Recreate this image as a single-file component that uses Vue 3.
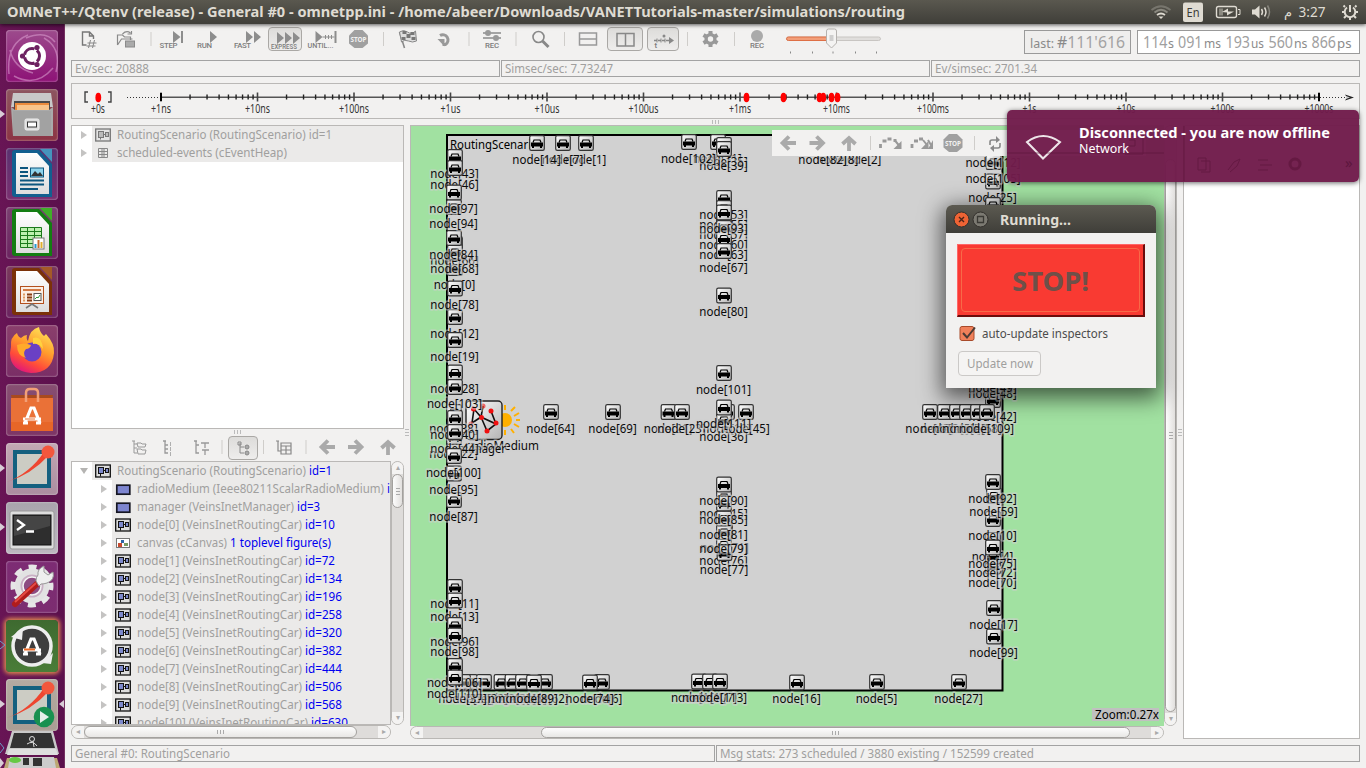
<script setup>
import { h } from 'vue'

// Single-line label with a fixed advance width.
const Fit = (p) => {
  const size = Number(p.size || 12.5)
  const w = Number(p.w)
  const line = Math.round(size * 1.36)
  return h('svg', { width: w, height: line, style: 'flex:none;display:block;overflow:visible' }, [
    h('text', {
      x: 0, y: Math.round(size * 1.06), textLength: w, lengthAdjust: 'spacingAndGlyphs',
      'font-size': size, 'font-weight': p.bold ? 700 : 400, fill: 'currentColor'
    }, p.t)
  ])
}
Fit.props = ['t', 'w', 'size', 'bold']

const dock = [
  { id: 'dash', top: '#9c4b8c', bottom: '#8d1276' },
  { id: 'files', top: '#8d5560', bottom: '#8c3444', run: 1 },
  { id: 'writer', top: '#5a3270', bottom: '#7a3070' },
  { id: 'calc', top: '#7a4070', bottom: '#6b2360' },
  { id: 'impress', top: '#7a3a5c', bottom: '#6b2360' },
  { id: 'firefox', top: '#8a3f6c', bottom: '#7a2e66' },
  { id: 'store', top: '#875072', bottom: '#7d3566' },
  { id: 'sketch', top: '#c3a8b4', bottom: '#ab8da0', run: 1 },
  { id: 'term', top: '#a9a4ad', bottom: '#bdb8c0', run: 1 },
  { id: 'settings', top: '#7d2c74', bottom: '#7c2d70' },
  { id: 'updater', top: '#3e6a30', bottom: '#4a7d38', run: 2 },
  { id: 'play', top: '#b5aaa2', bottom: '#aa9d94', run: 1, active: 1 }
]

const tools = [
  ['new', 37], ['open', 37], ['sep', 12], ['step', 29], ['run', 40], ['fast', 40], ['express', 38, 1],
  ['until', 35], ['stop', 39], ['sep', 11], ['flag', 37], ['redo', 37], ['sep', 12], ['evlog', 34],
  ['sep', 14], ['search', 35], ['sep', 13], ['hsplit', 34], ['vsplit', 40, 1], ['tline', 36, 1],
  ['sep', 13], ['gear', 33], ['sep', 15], ['rec', 30], ['slider', 117]
]
const treeTools = [
  ['tree1', 30], ['tree2', 28], ['tree3', 38], ['sep', 4], ['tree4', 38, 1], ['sep', 3],
  ['tree5', 38], ['sep', 6], ['left', 36], ['right', 22], ['up', 42]
]
const viewTools = [
  ['left', 32], ['right', 27], ['up', 36], ['sep', 7], ['jump', 33], ['jump2', 30], ['stop', 32],
  ['sep', 11], ['refresh', 30]
]

const pitch = 96.5
const names = ['1ns', '10ns', '100ns', '1us', '10us', '100us', '1ms', '10ms', '100ms', '1s', '10s', '100s', '1000s']
const majors = names.map((n, i) => ({ n: '+' + n, x: 161 + i * pitch, w: (n.endsWith('s') && !/[num]s$/.test(n) ? 14 + (n.length - 2) * 5 : 20 + (n.length - 3) * 5) + (n.includes('ms') ? 2 : 0) }))
const minors = []
for (let i = 0; i < 12; i++) for (let k = 2; k < 10; k++) minors.push(161 + (i + Math.log10(k)) * pitch)
const events = [98.3, 746.5, 783.5, 819.5, 823.3, 831.5, 837.5]

const car = (n, id) => ({ a: `node[${n}] (VeinsInetRoutingCar)`, w: n > 9 ? 171 : 165, b: 'id=' + id, bw: id > 99 ? 37 : 30, ic: 'net' })
const rows = [
  { a: 'radioMedium (Ieee80211ScalarRadioMedium)', w: 247, b: 'id=2', bw: 23, ic: 'mod' },
  { a: 'manager (VeinsInetManager)', w: 157, b: 'id=3', bw: 23, ic: 'mod' },
  car(0, 10),
  { a: 'canvas (cCanvas)', w: 90, b: '1 toplevel figure(s)', bw: 101, ic: 'canvas' },
  ...[72, 134, 196, 258, 320, 382, 444, 506, 568, 630].map((id, i) => car(i + 1, id))
]

// [index, x, y] of each vehicle icon centre
const cars = [
  [14, 537, 143], [7, 563, 143], [1, 586, 143], [102, 689, 142], [31, 718, 142], [35, 724, 145], [39, 724, 149],
  [82, 823, 143], [8, 838, 143], [2, 861, 143],
  [43, 455, 157], [46, 455, 168], [97, 454, 192.5], [94, 454, 207], [84, 454, 238], [66, 455, 244], [68, 455, 252],
  [0, 455, 268], [78, 455, 288.5], [12, 455, 317], [19, 455, 340], [28, 455, 372.5], [103, 455, 387],
  [38, 454, 412], [40, 455, 418], [44, 455, 432], [22, 454, 437], [100, 454, 456], [95, 454, 473.5], [87, 454, 500],
  [11, 455, 587], [13, 455, 600.5], [96, 455, 625], [98, 455, 635.5], [106, 455, 666], [110, 455, 677.5],
  [37, 463, 682], [20, 470, 682], [32, 484, 682], [29, 501.5, 682], [33, 512.5, 682], [41, 523, 682], [89, 534, 682.5], [62, 545, 682],
  [74, 590, 682.5], [6, 602, 682],
  [64, 551, 412], [69, 613, 412], [21, 668.5, 412], [23, 682, 412], [111, 724, 407.5], [18, 727, 412], [36, 724, 420], [45, 746, 412],
  [53, 724, 198], [55, 724, 208], [93, 724, 212.5], [57, 724, 218.5], [60, 724, 228], [63, 724, 238.5], [67, 724, 251],
  [80, 724, 295.5], [101, 724, 373],
  [90, 724, 484.5], [15, 724, 497], [85, 724, 503.5], [81, 724, 518.5], [71, 725, 531.5], [79, 724, 532], [76, 724, 544.5], [77, 724.5, 553],
  [104, 699, 681.5], [107, 710, 681.5], [113, 720, 681.5],
  [112, 993.5, 146.5], [105, 993.5, 162], [25, 993, 181.5], [26, 993, 205],
  [48, 993, 377.5], [49, 993, 371], [42, 993, 400], [47, 930, 412], [51, 945, 412], [52, 957, 412], [54, 967, 412], [58, 978, 412], [109, 987, 412],
  [92, 993, 482], [59, 994, 495.5], [10, 993, 519], [4, 993, 540], [75, 993, 547.5], [72, 993, 556.5], [70, 993, 566.5],
  [17, 994, 608], [99, 994, 636.5], [27, 959, 682], [5, 877, 682], [16, 797, 682.5]
].sort((a, b) => a[0] - b[0]).map(([n, x, y]) => ({ n, x, y, w: 35 + String(n).length * 6.7 }))
</script>

<template>
  <div class="screen">
    <svg class="defs" width="0" height="0">
      <defs>
        <linearGradient id="ig" x1="0" y1="0" x2="1" y2="1"><stop offset="0" stop-color="#fff" /><stop offset="1" stop-color="#b4b4b4" /></linearGradient>
        <linearGradient id="paper" x1="0" y1="0" x2="0" y2="1"><stop offset="0" stop-color="#fff" /><stop offset="1" stop-color="#ddd" /></linearGradient>
        <linearGradient id="fox" x1=".8" y1="0" x2=".3" y2="1"><stop offset="0" stop-color="#ffe85a" /><stop offset=".45" stop-color="#ff9a2c" /><stop offset=".75" stop-color="#ff4b3a" /><stop offset="1" stop-color="#e0157c" /></linearGradient>

        <g id="sep"><path d="M0-8V6" stroke="#cfcdca" /></g>
        <g id="new" fill="none" stroke="#777"><path d="M-3 5h-4V-8H0L4-4v3M0-8v4h4" stroke-width="1.4" /><path d="M1 0L-1 8M5 0L3 8M-2 3h9M-3 6h9" stroke="#888" /></g>
        <g id="open" fill="none" stroke="#8a8a8a"><path d="M-9 5V-5h5l2 2h6v3M-9 5l4-6H6M-4-6q4-4 8-1M5-9v3H1" stroke-width="1.2" /><rect x="-1" y="1" width="9" height="6" fill="#aaa" /></g>
        <g id="step"><path d="M1.500-9L9-3 1.500 3Z" fill="#8d8d8d" /><path d="M10.500-9V3" stroke="#8d8d8d" stroke-width="2" /><text x="-12" y="8" textLength="18" class="tiny">STEP</text></g>
        <g id="run"><path d="M4-9L11-3 4 3Z" fill="#8d8d8d" /><text x="-9" y="8" textLength="15" class="tiny">RUN</text></g>
        <g id="fast"><path d="M0-9L7-3 0 3ZM8-9L15-3 8 3Z" fill="#8d8d8d" /><text x="-12" y="8" textLength="17" class="tiny">FAST</text></g>
        <g id="express"><path d="M-8-8L-1-2-8 4ZM0-8L7-2 0 4ZM8-8L15-2 8 4Z" fill="#8d8d8d" /><text x="-14" y="9" textLength="26" lengthAdjust="spacingAndGlyphs" class="tiny">EXPRESS</text></g>
        <g id="until"><path d="M-6-9L1-3-6 3Z" fill="#8d8d8d" /><path d="M14-9V3" stroke="#8d8d8d" stroke-width="2" /><path d="M1-3H13M4-5v4M7-5v4M10-5v4" stroke="#8d8d8d" /><text x="-14" y="8" textLength="26" lengthAdjust="spacingAndGlyphs" class="tiny">UNTIL...</text></g>
        <g id="stop"><path d="M-4-10H4L9.500-4.500V3.500L4 8H-4L-9.500 3.500V-4.500Z" fill="#a0a0a0" /><text x="-8" y="2" textLength="16" lengthAdjust="spacingAndGlyphs" font-size="7.500" font-weight="700" fill="#f2f1f0">STOP</text></g>
        <g id="flag"><path d="M-8-8L-3 8" stroke="#888" stroke-width="1.600" /><path d="M-8-8q4-3 8 0t8-1L9 1q-4 2-8 0t-7 1Z" fill="#ddd" stroke="#888" /><path d="M-5-9h4v3h-4zM3-8h4v3H3zM-1-6h4v4h-4zM-6-3h4v3h-4zM4-3h4v3H4z" fill="#777" /></g>
        <g id="redo" fill="none" stroke="#999" stroke-width="3"><path d="M-4.500-4.500A5.200 5.200 0 1 1 1 4.500H-2" /><path d="M-7-1H0V6.500Z" fill="#999" stroke="none" /></g>
        <g id="evlog"><path d="M-9-7H9M-9-2H9" stroke="#8a8a8a" stroke-width="1.600" /><circle cx="-4" cy="-7" r="3" fill="#999" /><circle cx="4" cy="-2" r="3" fill="#999" /><text x="-7" y="8" textLength="14" class="tiny">REC</text></g>
        <g id="search" fill="none" stroke="#888"><circle cx="-2" cy="-3" r="5.500" stroke-width="1.600" /><path d="M2 1L8 7" stroke-width="3" /></g>
        <g id="hsplit" fill="none" stroke="#999" stroke-width="1.500"><path d="M-8.500-7H8.500V5H-8.500ZM-8.500-1H8.500" /></g>
        <g id="vsplit" fill="none" stroke="#888" stroke-width="1.500"><path d="M-8-6.500H9V6H-8ZM.5-6V6" /></g>
        <g id="tline" fill="none" stroke="#888"><path d="M-9 .5H7" stroke-width="1.400" stroke-dasharray="3 1" /><path d="M6-3L11 .5 6 4Z" fill="#888" stroke="none" /><path d="M-6-1.500v4M-2-1.500v4M2-1.500v4" /><circle cx="1" cy="-4" r="1.500" fill="#888" stroke="none" /><text x="-8.500" y="8" stroke="none" class="tiny">t</text></g>
        <g id="gear"><circle cy="-1" r="4.400" fill="none" stroke="#999" stroke-width="3.400" /><path d="M0-9V-5M0 3V7M-7-5L-3.500-3M7-5L3.500-3M-7 3L-3.500 1M7 3L3.500 1" stroke="#999" stroke-width="4" /></g>
        <g id="rec"><circle cy="-4" r="6" fill="#aaa" /><text x="-7" y="8" textLength="14" class="tiny">REC</text></g>
        <g id="slider"><rect x="-44" y="-3" width="94" height="3.500" rx="2" fill="#e0dedc" stroke="#c8c5c2" /><rect x="-44" y="-3" width="44" height="3.500" rx="2" fill="#f29e79" stroke="#de6f45" /><path d="M-2-11h6q2 0 2 2V3L1 8-4 3V-9q0-2 2-2Z" fill="#f4f3f2" stroke="#b5b2af" /><path d="M-1-4h4M-1-2h4M-1 0h4" stroke="#aaa" /><path d="M-40 11.500v2M-18 11.500v2M2.500 11.500v2M25 11.500v2M46 11.500v2" stroke="#888" /></g>
        <g id="left"><path d="M8-1H-5M1-7.500L-5.500-1 1 5.500" fill="none" stroke="#aaa" stroke-width="3.800" /></g>
        <g id="right"><path d="M-8-1H5M-1-7.500L5.500-1-1 5.500" fill="none" stroke="#aaa" stroke-width="3.800" /></g>
        <g id="up"><path d="M0 7V-5M-6.500 0L0-6 6.500 0" fill="none" stroke="#aaa" stroke-width="3.800" /></g>
        <g id="jump" fill="none" stroke="#999"><path d="M-10 4V0M-8-3h4M-3-5h4M3-3.500h3" stroke-width="2.800" /><path d="M4-4L9 2" stroke-width="2" /><path d="M11-3V5H3Z" fill="#999" stroke="none" /></g>
        <g id="jump2" fill="none" stroke="#999"><path d="M-10 4V0M-8-3h4M-3-5h4" stroke-width="2.800" /><path d="M1-4L5 1M6-4L9 1" stroke-width="2" /><path d="M6.500-3V5H-1ZM11-4V5H6Z" fill="#999" stroke="none" /></g>
        <g id="refresh" fill="none" stroke="#888" stroke-width="1.600"><path d="M-5 1V-2q0-2 2-2H2M5-1V2q0 2-2 2H-2" /><path d="M1-8L5-4 1-1ZM-1 1L-5 4-1 8Z" fill="#888" stroke="none" /></g>
        <g id="tree1" fill="none" stroke="#999"><path d="M-5-7V5h3M-5-4h3M-5 0h3M-7-7h3" /><path d="M-2-5h4l1 1h4l-1 3h-7zM-2 1h4l1 1h4l-1 4h-7z" /></g>
        <g id="tree2" fill="none" stroke="#999"><path d="M-3-7V5h3M-3-3h3M-3 1h3M-5-7h3M2-5h1M2-3h1M2 0h1M2 2h1M2 5h1M2 7h1" stroke-width="1.300" /></g>
        <g id="tree3" fill="none" stroke="#999"><path d="M-5-7V5h3M-5-3h3M-7-7h3M0-5h8M4-5v5M1 2h7M4 2v5" stroke-width="1.300" /></g>
        <g id="tree4" fill="none" stroke="#888"><path d="M-3-5V5h4M-3-1h4M-5-6h3v3h-3z" /><circle cx="4" cy="-1" r="2" fill="#aaa" /><circle cx="4" cy="5" r="2" fill="#aaa" /></g>
        <g id="tree5" fill="none" stroke="#888"><path d="M-6-7V3h3M-8-7h3M-3-5H7V6H-3ZM-3-2H7M-3 2H7M2-2V6" stroke-width="1.200" /></g>

        <g id="net"><rect x=".7" y="2" width="14.600" height="12" fill="#dcdcdc" stroke="#111" stroke-width="1.300" /><rect x="3.500" y="4.500" width="5" height="6" fill="#7d89cc" stroke="#111" /><rect x="10.500" y="5.500" width="3" height="4" fill="#7d89cc" stroke="#111" /><path d="M8 7.500h3M5.500 10.500v3" stroke="#111" /></g>
        <g id="mod"><rect x="1.800" y="4.200" width="13" height="9" fill="#7d85d0" stroke="#161622" stroke-width="1.700" /></g>
        <g id="canvas"><rect x="1.500" y="3.500" width="13" height="9" fill="#fff" stroke="#777" /><path d="M3 8h4v4H3z" fill="#c84b2f" /><path d="M6 5h3v3H6z" fill="#2f65a5" /><path d="M9 8h4v3H9z" fill="#789b62" /></g>
        <g id="netgray"><rect x=".7" y="2" width="14.600" height="12" fill="#e4e4e4" stroke="#777" stroke-width="1.300" /><rect x="3.500" y="4.500" width="5" height="6" fill="#bbb" stroke="#777" /><rect x="10.500" y="5.500" width="3" height="4" fill="#bbb" stroke="#777" /><path d="M8 7.500h3M5.500 10.500v2" stroke="#777" /></g>
        <g id="heap"><path d="M3.500 3.500h9v9h-9zM3.500 6.500h9M3.500 9.500h9" fill="none" stroke="#888" /><path d="M6 5h4M6 8h4M6 11h4" stroke="#888" /></g>

        <g id="car"><rect x="-7.300" y="-7.300" width="14.600" height="14.600" rx="1.600" fill="url(#ig)" stroke="#333" stroke-width="1.200" /><path d="M-4-.5L-3-3H3L4-.5" fill="none" stroke="#000" stroke-width="1.200" /><path d="M-6-.5H6V3.500H5V5H3V3.500H-3V5H-5V3.500H-6Z" fill="#000" /></g>

        <g id="dash"><path d="M3 44Q0 14 22 5M49 12Q40 0 20 8M50 42Q56 18 38 8M8 46Q30 58 47 38M4 20Q8 38 27 43" fill="none" stroke="#d79acb" stroke-opacity=".6" stroke-width="1.500" /><circle cx="26" cy="26" r="14" fill="#fff" /><circle cx="26" cy="26" r="7.500" fill="none" stroke="#6c2160" stroke-width="3" stroke-dasharray="13 2.700" stroke-dashoffset="-9" /><circle cx="16.500" cy="26" r="2.600" fill="#6c2160" /><circle cx="31" cy="17.500" r="2.600" fill="#6c2160" /><circle cx="31" cy="34.500" r="2.600" fill="#6c2160" /></g>
        <g id="files"><path d="M7 4h38l2 14H5z" fill="#c8c8c8" /><path d="M8 12h36v12H8z" fill="#4a4a4a" /><path d="M9 14h34v7H9z" fill="#eb8b3c" /><path d="M11 16h32v5H11z" fill="#f7c48b" /><path d="M5 18l4 3h34l4-3v29H7z" fill="#aaa" /><path d="M7 22h38v25H7z" fill="#a2a2a2" /><rect x="19" y="30" width="14" height="11" rx="1.500" fill="#ddd" stroke="#eee" /><rect x="21.500" y="33" width="9" height="5" fill="#fff" stroke="#333" /></g>
        <g id="writer"><path d="M9 2h24l13 14v33H9q-3 0-3-3V5q0-3 3-3z" fill="#125f8f" /><path d="M10 5h21l12 13v28H10z" fill="url(#paper)" /><path d="M34 1h12v13z" fill="#4594bd" /><path d="M14 20h8M14 24h8M14 28h8M14 32.500h24M14 36.500h24M14 41h18" stroke="#0c567f" stroke-width="2" /><rect x="24.500" y="20" width="13" height="9" fill="#8fd4ec" stroke="#0c567f" /><path d="M25 28l4-5 3 3 2-2 3 4z" fill="#333" /></g>
        <g id="calc"><path d="M9 2h24l13 14v33H9q-3 0-3-3V5q0-3 3-3z" fill="#137d12" /><path d="M10 5h21l12 13v28H10z" fill="url(#paper)" /><path d="M34 1h12v13z" fill="#3fae28" /><path d="M14.500 20.500h21v20h-21z" fill="#bdf0b0" stroke="#1b7a1b" /><path d="M14 24.500h22M14 28.500h22M14 32.500h22M14 36.500h22M21.500 20v21M28.500 20v21" stroke="#1b7a1b" /><rect x="27" y="31" width="11" height="11" fill="#fff" stroke="#777" /><path d="M28.500 37h2v4h-2z" fill="#2498d0" /><path d="M31.500 33h2v8h-2z" fill="#c86b2a" /><path d="M34.500 35h2v6h-2z" fill="#e0b030" /></g>
        <g id="impress"><path d="M9 2h24l13 14v33H9q-3 0-3-3V5q0-3 3-3z" fill="#7b3108" /><path d="M10 5h21l12 13v28H10z" fill="url(#paper)" /><path d="M34 1h12v13z" fill="#a45a27" /><rect x="14.500" y="20.500" width="23" height="17" fill="#fbeee4" stroke="#b3501e" /><path d="M17 24h18" stroke="#d27a45" stroke-width="2" /><path d="M21 28.500h5M21 31.500h5M21 34.500h5" stroke="#8a3c12" stroke-width="1.800" /><path d="M17 28.500h2M17 31.500h2M17 34.500h2" stroke="#e09a60" stroke-width="2" /><rect x="28" y="27.500" width="7" height="7" fill="#fff" stroke="#555" /><path d="M29 33l2-2 1 1 2-3" fill="none" stroke="#2f9a3c" /><path d="M20 42l6-4 6 4" fill="none" stroke="#777" stroke-width="1.600" /></g>
        <g id="firefox"><path d="M5 22Q4 12 11 8q1 4 4 5 3-3 6-3-1 4 1 6Q24 4 33 2q1 6 5 9l2-2q9 10 8 19-2 20-23 20Q4 46 4 28z" fill="url(#fox)" /><circle cx="26" cy="27" r="9.500" fill="#6a40c4" /><path d="M11 20q7-3 14 0-1 4-5 4-4 4 0 9-9-2-9-13z" fill="#ffaa2a" /><path d="M27 13q9-3 10 11-4-6-10-5z" fill="#ffd23f" /></g>
        <g id="store"><path d="M5 11h42l-1 4H6z" fill="#a94a1e" /><path d="M5 14h42v33H5z" fill="#ea7137" /><path d="M5 38h42v9H5z" fill="#e66424" opacity=".8" /><path d="M20 18V9q0-4 4-4h4q4 0 4 4v9" fill="none" stroke="#f2a077" stroke-width="2.500" /><path d="M17 39h5M30 39h5M19 39l6-15h3l6 15M17 35h18" fill="none" stroke="#fff" stroke-width="3.200" /><path d="M19 35h10" stroke="#ea7137" stroke-width="1" /></g>
        <g id="sketch"><path d="M9 9h34v34H9z" fill="#ccccc4" stroke="#14607f" stroke-width="4" /><path d="M1 39Q24 30 38 9l4 4Q26 31 1 39z" fill="#ee4630" /><circle cx="42" cy="9" r="6.500" fill="#f2573d" /></g>
        <g id="term"><rect x="4" y="9" width="44" height="38" rx="2" fill="#ddd" stroke="#999" /><rect x="7" y="13" width="38" height="30" fill="#2e2e2e" stroke="#111" /><path d="M8 14h36v10L8 34z" fill="#555" opacity=".6" /><path d="M11 18l7 5-7 5M20 29.500h8" fill="none" stroke="#fff" stroke-width="2.300" /></g>
        <g id="settings"><circle cx="26" cy="25" r="14.500" fill="#c9b0c4" stroke="#e2e2e2" stroke-width="6" /><circle cx="26" cy="25" r="19" fill="none" stroke="#e6e6e6" stroke-width="5" stroke-dasharray="8 6.920" stroke-dashoffset="4" /><circle cx="26" cy="25" r="9" fill="#8d4c82" stroke="#f3f3f3" stroke-width="1.500" /><path d="M9 43L33 21" stroke="#b01c1c" stroke-width="6" stroke-linecap="round" /><path d="M9 41L30 22" stroke="#e44b44" stroke-width="2" /><path d="M30 20q0-4 2-6-1-6 6-9l0 6 4 3 5-3q2 8-6 11-3 1-6 1l-2 2z" fill="#efefef" stroke="#999" /></g>
        <g id="updater"><circle cx="26" cy="26" r="19" fill="#3e3e3e" stroke="#eee" stroke-width="3.500" /><path d="M5 17L17 8l-1 12z" fill="#eee" /><path d="M47 33L36 43l9 1z" fill="#eee" /><path d="M17 34h5M30 34h5M19 34l6-15h3l6 15M17 30h18" fill="none" stroke="#fff" stroke-width="3.200" /><path d="M18 29.500h11" stroke="#ec6b27" stroke-width="2" /></g>
        <g id="play"><use href="#sketch" /><circle cx="38" cy="38" r="10.300" fill="#199150" /><path d="M34 32l9 6-9 6z" fill="#e6efe9" /></g>
      </defs>
    </svg>

    <header class="topbar">
      <Fit t="OMNeT++/Qtenv (release) - General #0 - omnetpp.ini - /home/abeer/Downloads/VANETTutorials-master/simulations/routing" w="898" size="14" bold="1" />
      <svg class="tray" width="226" height="24" viewBox="1140 0 226 24">
        <g fill="none" stroke-width="1.800"><path d="M1151.500 10Q1161 2.500 1170.500 10" stroke="#77756d" /><path d="M1154.500 12.500Q1161 7 1167.500 12.500" stroke="#8b8980" /><path d="M1157 15Q1161 12 1165 15" stroke="#dfdbd2" /></g>
        <path d="M1158.500 16.500h5l-2.500 2.500z" fill="#dfdbd2" />
        <rect x="1183" y="2.500" width="20" height="19.500" rx="2" fill="#dfdbd2" />
        <text x="1186.500" y="17" textLength="13" lengthAdjust="spacingAndGlyphs" font-size="12.500" fill="#3c3b37">En</text>
        <rect x="1216.500" y="6.500" width="20" height="11" rx="2" fill="none" stroke="#dfdbd2" stroke-width="1.400" /><path d="M1238 9.500h2v5h-2" fill="none" stroke="#dfdbd2" /><path d="M1219 8.500h4v7h-4z" fill="#8b8980" /><path d="M1222 12l6-3.500v3h6l-7 4v-3z" fill="#dfdbd2" />
        <path d="M1252 9.500h3l4.500-4v13l-4.500-4h-3z" fill="#dfdbd2" /><path d="M1261.500 9q2 3 0 6M1264.500 7.500q3 4.500 0 9" fill="none" stroke="#dfdbd2" stroke-width="1.500" /><path d="M1267.500 5.500q4 6.500 0 13" fill="none" stroke="#88867e" stroke-width="1.500" />
        <text x="1284" y="17" font-size="13" fill="#dfdbd2" font-family="DejaVu Sans">م</text>
        <text x="1298.500" y="17" textLength="27" lengthAdjust="spacingAndGlyphs" font-size="14" fill="#dfdbd2">3:27</text>
        <g transform="translate(1350 12)" stroke="#dfdbd2" fill="none"><path d="M-3-4.500A5.300 5.300 0 1 0 3-4.500M0-7V0" stroke-width="2" /><path d="M-5-5L-6.500-6.500M5-5L6.500-6.500M-5.500 0H-8M5.500 0H8M-4 4L-6 6M4 4L6 6M0 6V8" stroke-width="2" /></g>
      </svg>
    </header>

    <aside class="dock">
      <div v-for="d in dock" :key="d.id" class="slot">
        <div class="tile" :class="{ glow: d.id === 'updater' }" :style="{ background: `linear-gradient(${d.top},${d.bottom})` }">
          <svg width="52" height="52"><use :href="'#' + d.id" /></svg>
        </div>
        <svg v-if="d.run" class="mark" width="6" height="10"><path d="M0 1L5 5 0 9" :fill="d.run === 2 ? 'none' : '#d8ccd6'" :stroke="d.run === 2 ? '#6c9cc8' : 'none'" /></svg>
        <svg v-if="d.active" class="mark end" width="6" height="10"><path d="M6 1L1 5 6 9Z" fill="#d8ccd6" /></svg>
      </div>
      <svg class="stack" width="65" height="38" viewBox="0 730 65 38">
        <path d="M12 731h41l6 23H5z" fill="#c9c9c9" /><path d="M14 733h37l4 15H10z" fill="#333" /><path d="M9 749h47l2 6H7z" fill="#dedede" /><circle cx="32" cy="739" r="2.500" fill="none" stroke="#ddd" /><path d="M27 744q6-4 10 2M33 741l1 6" fill="none" stroke="#ddd" />
        <path d="M7 758h50l3 10H4z" fill="#bda874" /><path d="M10 757h44l2 11H8z" fill="#ccc" /><ellipse cx="15" cy="760" rx="6" ry="3" fill="#65c944" /><path d="M23 758h6v7h-6zM33 758h9v8h-9z" fill="#333" /><path d="M0 743l4 5-4 5" fill="none" stroke="#6c9cc8" /><path d="M0 758l4 5-4 5z" fill="#d8ccd6" />
      </svg>
    </aside>

    <main class="main">
      <div class="toolbar">
        <span v-for="(t, i) in tools" :key="i" class="tool" :class="{ on: t[2] }">
          <svg :width="t[1]" height="34" :viewBox="`${-t[1] / 2} -16 ${t[1]} 34`"><use :href="'#' + t[0]" /></svg>
        </span>
        <svg class="counters" width="336" height="24" viewBox="1024 30 336 24">
          <rect x="1024.500" y="30.500" width="106" height="23" fill="#efeeed" stroke="#9a9a9a" /><rect x="1137.500" y="30.500" width="222" height="23" fill="#fff" stroke="#9a9a9a" />
          <g fill="#8a8a8a" font-size="12.500">
            <text x="1030" y="48" textLength="24" lengthAdjust="spacingAndGlyphs">last:</text>
            <text x="1057" y="48" textLength="68" lengthAdjust="spacingAndGlyphs" font-size="16.500">#<tspan fill="#a3a3a3">111'616</tspan></text>
            <text x="1168" y="48">s</text><text x="1204" y="48" textLength="17" lengthAdjust="spacingAndGlyphs">ms</text><text x="1251" y="48" textLength="13" lengthAdjust="spacingAndGlyphs">us</text><text x="1294" y="48" textLength="13.500" lengthAdjust="spacingAndGlyphs">ns</text><text x="1337" y="48" textLength="14.500" lengthAdjust="spacingAndGlyphs">ps</text>
          </g>
          <g fill="#a0a0a0" font-size="16.500">
            <text v-for="(v, i) in ['114', '091', '193', '560', '866']" :key="v" :x="[1143, 1178, 1225.500, 1268.500, 1311.500][i]" y="48" textLength="24.500" lengthAdjust="spacingAndGlyphs">{{ v }}</text>
          </g>
        </svg>
      </div>

      <div class="boxes">
        <div><Fit t="Ev/sec: 20888" w="74" /></div>
        <div><Fit t="Simsec/sec: 7.73247" w="108" /></div>
        <div><Fit t="Ev/simsec: 2701.34" w="102" /></div>
      </div>

      <div class="timeline">
        <svg width="1287" height="34" viewBox="72 84 1287 34">
          <path d="M127 97.500H160M1320 97.500H1345" stroke="#333" stroke-dasharray="1 2" /><path d="M161 97.300H1319" stroke="#555" stroke-width="1.600" />
          <path v-for="x in minors" :key="x" :d="`M${x} 94.500v5`" stroke="#222" stroke-width="1.400" />
          <path v-for="m in majors" :key="m.x" :d="`M${m.x} 92.500v9`" stroke="#444" stroke-width="1.600" />
          <path d="M161 93v8M1319 93v8" stroke="#000" stroke-width="2" />
          <path d="M1345 94.500l9 3-9 3 2-3z" fill="#222" /><path d="M1346 96l4 1.500-4 1.500z" fill="#ccc" />
          <text v-for="m in majors" :key="m.n" :x="m.x - m.w / 2" y="112.500" :textLength="m.w" lengthAdjust="spacingAndGlyphs" font-size="12" fill="#333">{{ m.n }}</text>
          <text x="91" y="112.500" textLength="14" lengthAdjust="spacingAndGlyphs" font-size="12" fill="#333">+0s</text>
          <path d="M88 92h-3v10h3M108 92h3v10h-3" fill="none" stroke="#444" stroke-width="1.400" />
          <ellipse v-for="e in events" :key="e" :cx="e" cy="97.500" rx="2.900" ry="4.700" fill="#f00" />
        </svg>
      </div>
      <div class="grip"><i /><i /><i /></div>

      <div class="panes">
        <section class="side">
          <div class="tree top">
            <div class="row"><i class="tri" /><b><svg width="16" height="16"><use href="#netgray" /></svg><Fit t="RoutingScenario (RoutingScenario) id=1" w="215" /></b></div>
            <div class="row"><i class="tri" /><b><svg width="16" height="16"><use href="#heap" /></svg><Fit t="scheduled-events (cEventHeap)" w="170" /></b></div>
          </div>
          <div class="grip small"><i /><i /><i /></div>
          <div class="treebar">
            <span v-for="(t, i) in treeTools" :key="i" class="tool" :class="{ on: t[2] }">
              <svg :width="t[1]" height="26" :viewBox="`${-t[1] / 2} -13 ${t[1]} 26`"><use :href="'#' + t[0]" /></svg>
            </span>
          </div>
          <div class="browser">
            <div class="tree">
              <div class="row"><i class="tri open" /><b><svg width="16" height="16"><use href="#net" /></svg><Fit t="RoutingScenario (RoutingScenario)" w="189" /><Fit class="id" t="id=1" w="23" /></b></div>
              <div v-for="r in rows" :key="r.a" class="row deep"><i class="tri" /><b><svg width="16" height="16"><use :href="'#' + r.ic" /></svg><Fit :t="r.a" :w="r.w" /><Fit class="id" :t="r.b" :w="r.bw" /></b></div>
            </div>
            <div class="bar v"><em>▴</em><div class="track"><u class="knob tk" /></div><em>▾</em></div>
            <div class="bar h"><em>◂</em><div class="track"><u class="knob th" /></div><em>▸</em></div>
          </div>
        </section>
        <div class="grip vert"><i /><i /><i /></div>
        <section class="view">
          <div class="field">
            <svg class="net" width="753" height="600" viewBox="411 126 753 600">
              <rect x="447" y="135" width="555.500" height="555.500" fill="#d1d1d1" stroke="#000" stroke-width="2" />
              <text x="450" y="149" textLength="88" lengthAdjust="spacingAndGlyphs" font-size="12.500">RoutingScenario</text>
              <g stroke="#ffb000" stroke-width="2"><circle cx="505" cy="420" r="6" fill="#ffb000" /><path d="M511 411l4-4M514 416l5-3M516 420h4M514 424l5 3M511 429l3 4M505 410v-5M505 430v5" /></g>
              <rect x="466" y="401" width="36" height="38.500" rx="4" fill="url(#ig)" stroke="#222" stroke-width="1.400" />
              <path d="M474 409l7 8 15 7-9 7-6-14 2-11M481 417l-9 6 2-14M491 411l5 13" fill="none" stroke="#111" stroke-width="1.600" />
              <g fill="#f01010"><circle cx="473.500" cy="409" r="2.500" /><circle cx="483" cy="406" r="2.500" opacity=".6" /><circle cx="491" cy="411" r="2.500" /><circle cx="481.500" cy="417.500" r="2.500" /><circle cx="496" cy="423" r="2.500" /><circle cx="487" cy="431" r="2.500" /><circle cx="471" cy="424" r="2.500" opacity=".6" /></g>
              <g class="lab"><text x="465" y="450" textLength="74" lengthAdjust="spacingAndGlyphs">radioMedium</text><text x="458" y="453" textLength="48" lengthAdjust="spacingAndGlyphs">manager</text></g>
              <g v-for="(c, i) in cars" :key="i" :transform="`translate(${c.x} ${c.y})`">
                <use href="#car" />
                <text class="label" :x="-c.w / 2 - 0.5" y="20.500" :textLength="c.w" lengthAdjust="spacingAndGlyphs">node[{{ c.n }}]</text>
              </g>
            </svg>
            <div class="zoom"><Fit t="Zoom:0.27x" w="64" /></div>
            <div class="viewbar">
              <span v-for="(t, i) in viewTools" :key="i" class="tool"><svg :width="t[1]" height="26" :viewBox="`${-t[1] / 2} -13 ${t[1]} 26`"><use :href="'#' + t[0]" /></svg></span>
            </div>
          </div>
          <div class="bar v"><em>▴</em><div class="track"><u class="knob cv" /></div><em>▾</em></div>
          <div class="bar h"><em>◂</em><div class="track"><u class="knob ch" /></div><em>▸</em></div>
        </section>
        <div class="grip vert right"><i /><i /><i /></div>
        <section class="log"><div class="logbar" /></section>
      </div>

      <div class="boxes status">
        <div><Fit t="General #0: RoutingScenario" w="155" /></div>
        <div><Fit t="Msg stats: 273 scheduled / 3880 existing / 152599 created" w="314" /></div>
      </div>
    </main>

    <div class="dialog">
      <div class="dtitle">
        <svg width="54" height="28"><circle cx="15.500" cy="14.500" r="7.500" fill="#ee6334" stroke="#33302c" /><path d="M13 12l5 5M18 12l-5 5" stroke="#4a2318" stroke-width="1.400" /><circle cx="34.500" cy="14.500" r="7.500" fill="#7c7a72" stroke="#33302c" /><path d="M31.500 11.500h6v6h-6z" fill="none" stroke="#3a3934" stroke-width="1.300" /></svg>
        <Fit t="Running..." w="71" size="14" bold="1" />
      </div>
      <div class="dbody">
        <div class="stopbtn"><div><Fit t="STOP!" w="77" size="27" bold="1" /></div></div>
        <div class="check">
          <svg width="17" height="17"><rect x="1" y="1.500" width="14" height="14" rx="2" fill="#f0805a" stroke="#a84a2a" /><path d="M4 8l4 4.500 8-10" fill="none" stroke="#4a3a34" stroke-width="2" /></svg>
          <Fit t="auto-update inspectors" w="126" />
        </div>
        <div class="upd"><Fit t="Update now" w="66" /></div>
      </div>
    </div>

    <div class="notice">
      <svg width="72" height="72"><path d="M20 32Q36 20 53 32L36 48.500Z" fill="none" stroke="#eee5e9" stroke-width="2" /></svg>
      <div><Fit t="Disconnected - you are now offline" w="251" size="14" bold="1" /><Fit t="Network" w="50" /></div>
      <svg class="ghost" width="353" height="72" viewBox="1007 110 353 72"><g fill="none" stroke="#5b1439"><path d="M1198 158h8v12h-8zM1201 161h9v11h-9M1184 126v55M1007 153h157M1125 134h18v20h-18M1129 140h6v6h-6M1228 170l6-8 6-3-3 7-7 6M1258 160h10M1260 165h12M1258 170h10" /><circle cx="1295" cy="164" r="5" stroke-width="3" /></g><text x="1345" y="168" font-size="15" fill="#4d0f31">»</text></svg>
    </div>
  </div>
</template>

<style>
body { margin: 0; overflow: hidden; }
</style>
<style scoped>
.screen { position: relative; width: 1366px; height: 768px; overflow: hidden; display: grid; grid-template: 24px 744px / 65px 1301px; background: #f2f1f0; font-family: "Noto Sans", "Open Sans", sans-serif; font-size: 12.5px; color: #a09f9e; }
.screen svg { display: block; }
.defs { position: absolute; }
.tiny { font-size: 7.8px; font-weight: 500; fill: #7c7c7c; font-family: Roboto, sans-serif; }
.topbar { grid-column: 1 / 3; display: flex; align-items: center; justify-content: space-between; padding: 0 0 2px 7px; box-sizing: border-box; background: linear-gradient(#5a584f, #3f3e39); color: #dfdbd2; box-shadow: 0 1px 4px rgba(0,0,0,.65); z-index: 2; }
.tray { position: relative; top: 1px; }
.dock { background: linear-gradient(90deg, #681555, #5b104c); border-right: 1px solid #743060; box-sizing: border-box; padding-top: 6px; overflow: hidden; position: relative; z-index: 1; }
.slot { height: 59px; padding-left: 6px; position: relative; }
.slot:nth-child(12) { height: 51px; }
.tile { width: 52px; height: 52px; border-radius: 4px; box-shadow: inset 0 0 2px rgba(255,255,255,.65); }
.tile.glow { box-shadow: 0 0 4px 2px #e08a50; }
.mark { position: absolute; left: 0; top: 20px; }
.mark.end { left: auto; right: 0; }
.stack { position: relative; }
.main { display: flex; flex-direction: column; padding: 0 6px; min-width: 0; }
.toolbar { height: 36px; display: flex; align-items: flex-start; }
.tool { display: flex; flex: none; }
.tool.on { position: relative; }
.tool.on::before { content: ""; position: absolute; inset: 3px 2px 7px; border: 1px solid #aaa8a5; border-radius: 4px; background: linear-gradient(#dddcda, #eeedec); }
.tool.on svg { position: relative; }
.counters { margin: 6px 0 0 auto; }
.boxes { display: flex; gap: 1px; height: 17px; flex: none; }
.boxes > div { flex: 1; box-sizing: border-box; border: 1px solid #a3a3a3; background: #f2f1f0; padding-left: 3px; display: flex; align-items: center; }
.status { margin-top: 6px; }
.timeline { margin-top: 6px; height: 34px; flex: none; border: 1px solid #bab8b6; }
.grip { height: 6px; display: flex; gap: 2px; justify-content: center; align-items: center; flex: none; }
.grip i { width: 1px; height: 4px; background: #bbb; }
.grip.vert { height: auto; flex-direction: column; }
.grip.vert i { width: 4px; height: 1px; }
.panes { height: 614px; flex: none; display: grid; grid-template-columns: 333px 6px 767px 6px 177px; }
.side { display: grid; grid-template-rows: 304px 5px 27px 278px; grid-template-columns: 333px; }
.tree { border: 1px solid #bab8b6; background: #fff; overflow: hidden; box-sizing: border-box; }
.row { height: 18px; display: flex; }
.tri { width: 20px; position: relative; flex: none; }
.tri::after { content: ""; position: absolute; left: 9px; top: 5px; border: 4px solid transparent; border-left: 6px solid #c4c3c2; border-right: 0; }
.tri.open::after { border: 4px solid transparent; border-top: 6px solid #b5b4b2; border-bottom: 0; top: 6px; left: 8px; }
.deep .tri { width: 40px; }
.deep .tri::after { left: 29px; }
.row b { flex: 1; background: #ebeae9; display: flex; align-items: center; padding-left: 3px; font-weight: 400; }
.row b > svg:nth-child(n+2) { position: relative; top: -1px; }
.row b > svg:nth-child(2) { margin-left: 6px; }
.id { color: #0000f0; margin-left: 3px; }
.treebar { display: flex; height: 27px; padding-left: 53px; }
.treebar .tool svg { position: relative; top: 1px; }
.treebar .tool.on::before { inset: 2px 4px 1px; }
.browser { display: grid; grid-template: 264px 14px / 320px 13px; }
.bar { display: flex; background: #dedcda; border: 1px solid #b9b7b4; border-radius: 8px; box-sizing: border-box; overflow: hidden; }
.bar.v { flex-direction: column; }
.bar em { font: 8px "DejaVu Sans"; color: #aaa; width: 12px; height: 12px; flex: none; text-align: center; line-height: 12px; background: #f4f3f2; }
.track { flex: 1; position: relative; display: flex; }
.v .track { flex-direction: column; }
.knob { box-sizing: border-box; border: 1px solid #a3a19e; border-radius: 7px; background: linear-gradient(#fdfdfd, #e8e7e5); text-decoration: none; display: flex; align-items: center; justify-content: center; }
.v .knob { background: linear-gradient(90deg, #fdfdfd, #e2e0de); }
.knob::after { content: ""; width: 7px; height: 4px; background: repeating-linear-gradient(90deg, #aaa 0 1px, transparent 1px 3px); }
.v .knob::after { width: 4px; height: 7px; background: repeating-linear-gradient(#aaa 0 1px, transparent 1px 3px); }
.tk { height: 34px; }
.th { width: 273px; }
.cv { height: 553px; margin-top: 21px; }
.ch { width: 589px; margin-left: 118px; }
.view { display: grid; grid-template: 601px 13px / 754px 13px; }
.field { position: relative; background: #a1e1a1; border: 1px solid #bab8b6; border-width: 1px 0 0 1px; overflow: hidden; }
.label, .lab text { font-size: 12.5px; fill: #0a0a0a; paint-order: stroke; stroke: rgba(208,208,208,.55); stroke-width: 3.5px; stroke-linejoin: round; }
.zoom { position: absolute; right: 5px; bottom: 5px; height: 13px; background: #c0c0c0; color: #000; padding-left: 3px; display: flex; align-items: center; }
.viewbar { position: absolute; left: 361px; top: 4px; width: 374px; height: 26px; display: flex; background: #f2f1f0; }
.viewbar .tool svg { position: relative; top: 1px; }
.log { border: 1px solid #bab8b6; background: #fff; box-sizing: border-box; }
.logbar { height: 52px; background: #f2f1f0; }
.dialog { position: absolute; left: 946px; top: 205px; width: 210px; height: 183px; border-radius: 6px 6px 0 0; box-shadow: 0 6px 22px 4px rgba(0,0,0,.6); background: #f2f1f0; z-index: 3; }
.dtitle { height: 28px; border-radius: 6px 6px 0 0; background: linear-gradient(#5c5a51, #3f3e39); display: flex; align-items: center; color: #dfdbd2; }
.dbody { padding: 11px 11px 0; display: flex; flex-direction: column; align-items: flex-start; }
.stopbtn { width: 188px; height: 73px; box-sizing: border-box; background: #f93a32; border: 1px solid #f66; border-right: 2px solid #6b0c0c; border-bottom: 2px solid #6b0c0c; padding: 3px; color: #6e5049; }
.stopbtn > div { height: 62px; border: 1px solid #f76a48; border-radius: 4px; display: flex; align-items: center; justify-content: center; }
.check { margin: 8px 0 0 2px; height: 17px; display: flex; align-items: center; gap: 6px; color: #4c4c4c; }
.upd { margin: 9px 0 0 1px; width: 83px; height: 25px; box-sizing: border-box; border: 1px solid #cbc9c7; border-radius: 4px; background: #f5f4f3; display: flex; align-items: center; justify-content: center; }
.notice { position: absolute; left: 1007px; top: 110px; width: 352px; height: 72px; border-radius: 5px; background: rgba(113,28,75,.97); box-shadow: 0 1px 5px rgba(0,0,0,.6); display: flex; color: #fff; z-index: 4; }
.notice > div { padding-top: 13px; position: relative; z-index: 1; }
.notice > div :last-child { margin-top: -2px; }
.ghost { position: absolute; left: 0; top: 0; opacity: .6; }
</style>
